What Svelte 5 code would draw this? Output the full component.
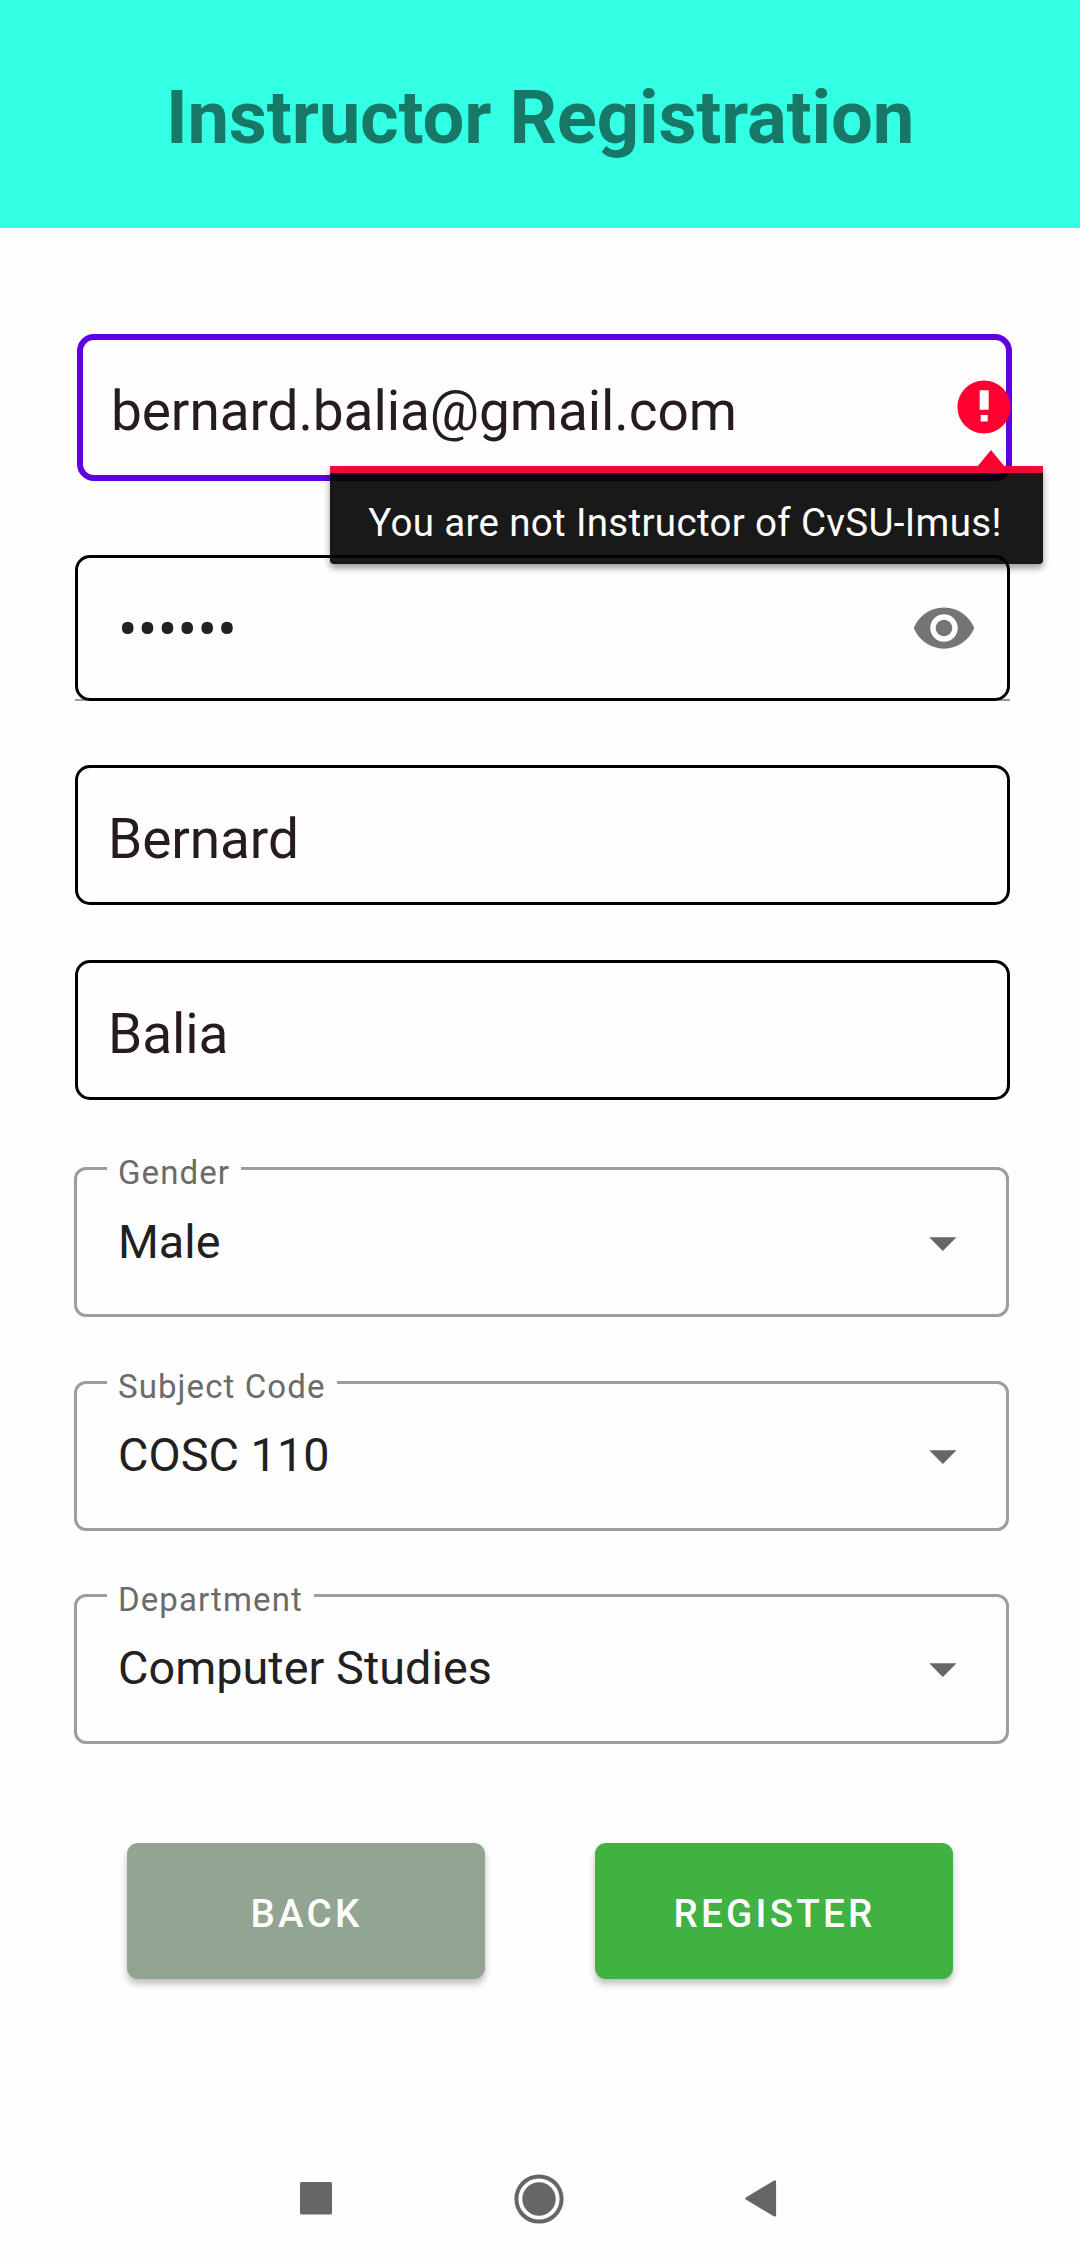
<script>
  const names = ['Bernard', 'Balia'];
  const selects = [
    { label: 'Gender', value: 'Male' },
    { label: 'Subject Code', value: 'COSC 110' },
    { label: 'Department', value: 'Computer Studies' }
  ];
</script>

<div class="screen">
  <header><h1>Instructor Registration</h1></header>

  <main>
    <div class="field email">
      <span class="text">bernard.balia@gmail.com</span>
      <svg class="alert" width="54" height="54" viewBox="0 0 54 54">
        <circle cx="27" cy="27" r="26.6" fill="#ff0030" />
        <path d="M22.7 10.3h9v19.4h-9zM23.7 35h7v6.6h-7z" fill="#fff" />
      </svg>
      <div class="tooltip">
        <svg class="pointer" width="28" height="17" viewBox="0 0 28 17">
          <path d="M0 17L14 0L28 17z" fill="#ff0030" />
        </svg>
        <span>You are not Instructor of CvSU-Imus!</span>
      </div>
    </div>

    <div class="password-row">
      <div class="field password">
        <span class="dots">••••••</span>
        <svg width="66" height="66" viewBox="0 0 24 24">
          <path
            fill="#757575"
            d="M12 4.5C7 4.5 2.73 7.61 1 12c1.73 4.39 6 7.5 11 7.5s9.27-3.11 11-7.5c-1.73-4.39-6-7.5-11-7.5zM12 17c-2.76 0-5-2.24-5-5s2.24-5 5-5 5 2.24 5 5-2.24 5-5 5zm0-8c-1.66 0-3 1.34-3 3s1.34 3 3 3 3-1.34 3-3-1.34-3-3-3z"
          />
        </svg>
      </div>
    </div>

    {#each names as name}
      <div class="field name"><span class="text">{name}</span></div>
    {/each}

    <div class="selects">
      {#each selects as s}
        <div class="select">
          <span class="label">{s.label}</span>
          <span class="value">{s.value}</span>
          <svg width="28" height="14" viewBox="0 0 28 14">
            <path d="M0.2 0.3H27.5L13.8 14z" fill="#666" />
          </svg>
        </div>
      {/each}
    </div>

    <div class="actions">
      <button class="back">BACK</button>
      <button class="register">REGISTER</button>
    </div>
  </main>

  <nav>
    <svg width="32" height="33" viewBox="0 0 32 33">
      <rect width="32" height="32.5" rx="1.5" fill="#666" />
    </svg>
    <svg width="50" height="50" viewBox="0 0 50 50">
      <circle cx="25" cy="25" r="22.6" fill="none" stroke="#666" stroke-width="4" />
      <circle cx="25" cy="25" r="16.7" fill="#666" />
    </svg>
    <svg width="32" height="37" viewBox="0 0 32 37">
      <path d="M1.5 18.5L29.8 1.7V35.3z" fill="#666" stroke="#666" stroke-width="2.6" stroke-linejoin="round" />
    </svg>
  </nav>
</div>

<style>
  :global(body) {
    margin: 0;
    background: #fefefe;
  }
  .screen {
    width: 1080px;
    height: 2263px;
    display: flex;
    flex-direction: column;
    background: #fefefe;
    font-family: Roboto, sans-serif;
    overflow: hidden;
  }
  svg {
    display: block;
    flex: none;
  }
  header {
    height: 228px;
    box-sizing: border-box;
    padding-top: 7px;
    background: #33ffe4;
    display: flex;
    align-items: center;
    justify-content: center;
  }
  h1 {
    margin: 0;
    font-size: 74.25px;
    line-height: 88px;
    font-weight: 700;
    letter-spacing: -0.2px;
    color: #177868;
    white-space: nowrap;
  }
  main {
    display: flex;
    flex-direction: column;
    padding: 106px 70px 0 75px;
  }
  .field {
    box-sizing: border-box;
    display: flex;
    align-items: center;
    border: 3px solid #000;
    border-radius: 15px;
  }
  .text {
    font-size: 55px;
    line-height: 64px;
    letter-spacing: -0.1px;
    color: #271c1c;
    white-space: nowrap;
  }
  .email {
    position: relative;
    margin: 0 -2px 0 2px;
    height: 147px;
    border: 6px solid #5f00e0;
    border-radius: 17px;
    padding: 7px 0 0 28px;
    justify-content: space-between;
  }
  .alert {
    margin: -9px -5px 0 0;
  }
  .tooltip {
    position: absolute;
    z-index: 2;
    top: 126px;
    right: -37px;
    width: 713px;
    height: 98px;
    box-sizing: border-box;
    border-top: 7px solid rgba(240, 0, 45, 0.96);
    border-radius: 0 0 3px 3px;
    background: rgba(0, 0, 0, 0.9);
    background-clip: padding-box;
    box-shadow: 0 4px 7px rgba(0, 0, 0, 0.4);
    display: flex;
    align-items: center;
    justify-content: center;
    padding: 8px 3px 0 0;
    font-size: 38.5px;
    line-height: 45px;
    letter-spacing: 0.34px;
    color: #fff;
    white-space: nowrap;
  }
  .pointer {
    position: absolute;
    right: 38px;
    top: -23px;
  }
  .password-row {
    height: 146px;
    margin-top: 74px;
    background: linear-gradient(#999, #999) bottom / 100% 2px no-repeat;
  }
  .password {
    height: 146px;
    padding: 0 30px 0 40px;
    justify-content: space-between;
  }
  .dots {
    font-size: 58px;
    line-height: 52px;
    padding-top: 1px;
    letter-spacing: 0.3px;
    color: #212121;
  }
  .name {
    height: 140px;
    padding: 7px 0 0 30px;
    margin-top: 64px;
  }
  .name + .name {
    margin-top: 55px;
  }
  .selects {
    display: flex;
    flex-direction: column;
    gap: 63.4px;
    margin: 67.2px 1px 0 -1px;
  }
  .select {
    position: relative;
    box-sizing: border-box;
    height: 150px;
    border: 3px solid #9d9d9d;
    border-radius: 12px;
    display: flex;
    align-items: center;
    justify-content: space-between;
    padding: 0 49px 0 41px;
  }
  .select svg {
    margin-top: 3px;
  }
  .label {
    position: absolute;
    left: 30px;
    top: -17px;
    padding: 0 11px;
    background: #fefefe;
    font-size: 33px;
    line-height: 39px;
    letter-spacing: 1.1px;
    color: #6b6b6b;
    white-space: nowrap;
  }
  .value {
    font-size: 46.75px;
    line-height: 54px;
    margin-top: -1px;
    letter-spacing: 0.05px;
    color: #212121;
    white-space: nowrap;
  }
  .actions {
    display: flex;
    gap: 110px;
    padding-left: 52px;
    margin-top: 99px;
  }
  button {
    width: 358px;
    height: 136px;
    border: 0;
    border-radius: 11px;
    padding: 5px 0 0 1px;
    font: 500 38.5px/45px Roboto, sans-serif;
    letter-spacing: 3.25px;
    color: #fff;
    box-shadow: 0 5px 7px rgba(0, 0, 0, 0.25);
  }
  .back {
    background: #92a592;
  }
  .register {
    background: #3fb242;
  }
  nav {
    margin-top: 195px;
    padding: 0 303px 0 300px;
    display: flex;
    align-items: center;
    justify-content: space-between;
  }
</style>
